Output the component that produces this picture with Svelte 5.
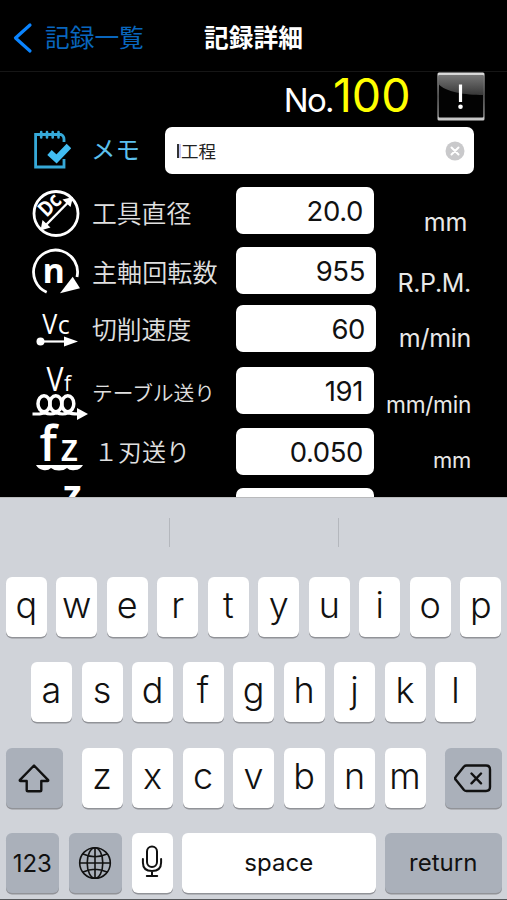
<script lang="ts">
  type Row = { id: string; label: string; value: string; unit: string };

  const rows: Row[] = [
    { id: 'dc', label: '工具直径', value: '20.0', unit: 'mm' },
    { id: 'n', label: '主軸回転数', value: '955', unit: 'R.P.M.' },
    { id: 'vc', label: '切削速度', value: '60', unit: 'm/min' },
    { id: 'vf', label: 'テーブル送り', value: '191', unit: 'mm/min' },
    { id: 'fz', label: '１刃送り', value: '0.050', unit: 'mm' },
    { id: 'z', label: '', value: '', unit: '' },
  ];

  let memo = $state('工程');
  const top = 'qwertyuiop'.split('');
  const middle = 'asdfghjkl'.split('');
  const bottom = 'zxcvbnm'.split('');

  function type(key: string) {
    memo = key + memo;
  }
</script>

<div class="screen">
  <header>
    <button class="back">
      <svg width="20" height="32" viewBox="0 0 20 32"><path d="M17 3 2.5 16 17 29" /></svg>
      <span>記録一覧</span>
    </button>
    <h1>記録詳細</h1>
  </header>

  <main>
    <div class="number">
      <span class="no">No.</span><span class="num">100</span>
      <button class="alert" aria-label="info">
        <svg width="48" height="49" viewBox="0 0 48 49">
          <defs>
            <linearGradient id="gloss" x1="0" y1="0" x2="0" y2="1">
              <stop offset="0" stop-color="#777" /><stop offset="1" stop-color="#383838" />
            </linearGradient>
            <linearGradient id="edge" x1="0" y1="0" x2="0" y2="1">
              <stop offset="0" stop-color="#ddd" /><stop offset=".5" stop-color="#888" /><stop offset="1" stop-color="#ccc" />
            </linearGradient>
          </defs>
          <rect x=".5" y=".5" width="47" height="48" rx="1.5" fill="url(#edge)" />
          <rect x="1.6" y="3" width="44.8" height="42.5" rx="1" fill="#030303" />
          <path d="M1.6 3h44.8v20C28 23 8 20 1.6 12z" fill="url(#gloss)" />
          <path d="M23.5 12.5v17.5" stroke="#fff" stroke-width="3.2" />
          <circle cx="23.5" cy="34.8" r="2.3" fill="#fff" />
        </svg>
      </button>
    </div>

    <div class="memo">
      <svg class="memoIcon" width="40" height="40" viewBox="0 0 40 40" fill="none" stroke="#36a9d8">
        <path d="M33 13V10q0-3-3-4.500H4.600v32.500H33V30" stroke-width="2.8" />
        <path d="M10.200 3v5.500M16 3v5.500M21.700 3v5.500M27.500 3v5.500" stroke-width="2.6" stroke-linecap="round" />
        <path d="M18.500 23.500l7 6.500L38 17" stroke="#41bdf3" stroke-width="6.5" />
      </svg>
      <span class="memoLabel">メモ</span>
      <div class="memoField">
        <i></i><span>{memo}</span>
        <svg width="20" height="20" viewBox="0 0 20 20">
          <circle cx="10" cy="10" r="9.5" fill="#c9c9cb" />
          <path d="M6.500 6.500l7 7m0-7l-7 7" stroke="#fff" stroke-width="2" stroke-linecap="round" />
        </svg>
      </div>
    </div>

    {#each rows as row}
      <div class="row {row.id}">
        <svg class="rowIcon" width="60" height="56" viewBox="0 0 60 56" fill="none" stroke="#fff">
          {#if row.id === 'dc'}
            <circle cx="26" cy="26.5" r="22" stroke-width="2.8" />
            <path d="M15 39 38 15.500" stroke-width="2.4" />
            <path d="M10.500 43.500l2-10.500 8 7.500zM43 10l-10.500 2.500 8 7.500z" class="solid" />
            <text x="0" y="0" transform="translate(16.5 31) rotate(-45)" font-size="21" font-weight="700" textLength="23" lengthAdjust="spacingAndGlyphs">Dc</text>
          {:else if row.id === 'n'}
            <path d="M16.700 45.200A22 22 0 1 1 47 30" stroke-width="2.8" />
            <path d="M42.700 29.700 50 41.300 30 46.300z" class="solid" />
            <text x="12.5" y="35.7" font-size="34" font-weight="700">n</text>
          {:else if row.id === 'vc'}
            <text x="12.3" y="29" font-size="28" textLength="15" lengthAdjust="spacingAndGlyphs">V</text>
            <text x="27.7" y="29" font-size="25">c</text>
            <circle cx="10.5" cy="36.5" r="4" class="solid" />
            <path d="M12 36.500h24" stroke-width="2.2" />
            <path d="M34 31.500 48 36.500 34 41.500z" class="solid" />
          {:else if row.id === 'vf'}
            <text x="16.5" y="24" font-size="32" textLength="17" lengthAdjust="spacingAndGlyphs">V</text>
            <text x="34" y="24" font-size="21" font-weight="500">f</text>
            <ellipse cx="14" cy="36.7" rx="6" ry="8" stroke-width="3.5" />
            <ellipse cx="25.8" cy="36.7" rx="6" ry="8" stroke-width="3.5" />
            <ellipse cx="37.8" cy="36.7" rx="6" ry="8" stroke-width="3.5" />
            <path d="M2.500 47h7q4-1 5-1.500 3 1.500 6 1.500t6-1.500q3 1.500 6 1.500t6-1.500q3 1.500 9 1.500" stroke-width="3.2" />
            <path d="M47 41 58 47 47 53z" class="solid" />
          {:else if row.id === 'fz'}
            <text x="9.5" y="33" font-size="48" font-weight="600">f</text>
            <text x="30.5" y="33" font-size="37" font-weight="600">z</text>
            <path d="M6 37h47q-3 5-8 5-5 1-8-2-3 2.500-8 2.500t-8-2.500q-3 3-8 2-5-1-7-5z" class="solid" />
          {:else}
            <text x="33" y="18.5" font-size="38" font-weight="700">z</text>
          {/if}
        </svg>
        <span class="label">{row.label}</span>
        <div class="value">{row.value}</div>
        <span class="unit">{row.unit}</span>
      </div>
    {/each}
  </main>

  <section class="keyboard">
    <div class="suggest"><span></span><span></span><span></span></div>
    <div class="keys">
      {#each top as key}<button class="key" onclick={() => type(key)}><span>{key}</span></button>{/each}
    </div>
    <div class="keys">
      {#each middle as key}<button class="key" onclick={() => type(key)}><span>{key}</span></button>{/each}
    </div>
    <div class="keys spread">
      <button class="key dark shift" aria-label="shift">
        <svg width="32" height="30" viewBox="0 0 32 30"><path d="M16 2.500 1.800 17.200q-.3.800.7.800H8.700v9q0 1.300 1.300 1.300h12q1.300 0 1.300-1.300v-9h6.200q1 0 .7-.8z" /></svg>
      </button>
      <div class="letters">
        {#each bottom as key}<button class="key" onclick={() => type(key)}><span>{key}</span></button>{/each}
      </div>
      <button class="key dark shift" aria-label="delete">
        <svg width="38" height="30" viewBox="0 0 38 30"><path d="M12.500 2.500H32q4 0 4 4v17.500q0 4-4 4H12.500q-1.500 0-2.500-1L1.800 16.800q-1.500-1.500 0-3L10 3.500q1-1 2.500-1zM17.500 10.500l9.500 9.800m0-9.800l-9.500 9.800" /></svg>
      </button>
    </div>
    <div class="keys last">
      <button class="key dark word side"><span>123</span></button>
      <button class="key dark side" aria-label="globe">
        <svg width="34" height="34" viewBox="0 0 34 34" class="thin">
          <circle cx="17" cy="17" r="15.3" />
          <ellipse cx="17" cy="17" rx="7.8" ry="15.3" />
          <path d="M17 1.700v30.600M1.700 17h30.600M5 8q12 5.500 24 0M5 26q12-5.500 24 0" />
        </svg>
      </button>
      <button class="key" aria-label="dictation">
        <svg width="22" height="34" viewBox="0 0 22 34" class="mic">
          <rect x="6" y="2.5" width="10" height="20.5" rx="5" />
          <path d="M1.900 15v3.500q0 8.500 9.100 8.500t9.100-8.500V15M11 27v5M5.800 32h10.400" />
        </svg>
      </button>
      <button class="key word space" onclick={() => type(' ')}><span>space</span></button>
      <button class="key dark word return"><span>return</span></button>
    </div>
  </section>
</div>

<style>
  :global(body) {
    margin: 0;
    background: #000;
  }

  .screen {
    display: flex;
    flex-direction: column;
    width: 507px;
    height: 900px;
    overflow: hidden;
    background: #000;
    color: #fff;
    font-family: Inter, "Noto Sans CJK JP", sans-serif;
  }

  button {
    margin: 0;
    padding: 0;
    border: 0;
    background: none;
    color: inherit;
    font-family: inherit;
  }

  svg {
    display: block;
    flex: none;
  }

  header {
    display: grid;
    grid-template-columns: 1fr auto 1fr;
    align-items: center;
    flex: none;
    box-sizing: border-box;
    height: 72px;
    padding-top: 4px;
    border-bottom: 1px solid #161616;
  }

  .back {
    display: flex;
    align-items: center;
    gap: 12px;
    padding-left: 13px;
    color: #0966bd;
    font-size: 24.7px;
    line-height: 36px;
  }

  .back svg {
    fill: none;
    stroke: #0a84ff;
    stroke-width: 3.2;
    stroke-linecap: round;
    stroke-linejoin: round;
  }

  h1 {
    margin: 0;
    font-size: 24.7px;
    font-weight: 700;
    line-height: 36px;
  }

  main {
    flex: none;
    height: 425px;
    overflow: hidden;
  }

  .number {
    display: flex;
    justify-content: flex-end;
    align-items: baseline;
    box-sizing: border-box;
    height: 55px;
    padding-right: 22px;
    line-height: 46px;
  }

  .no {
    font-size: 33px;
    font-weight: 400;
    letter-spacing: -1.7px;
  }

  .num {
    color: #ff0;
    font-size: 46.5px;
    font-weight: 400;
  }

  .alert {
    align-self: flex-start;
    margin-left: 26.5px;
  }

  .memo {
    display: flex;
    height: 60px;
  }

  .memoIcon {
    margin: 2px 0 0 31px;
  }

  .memoLabel {
    width: 74px;
    padding-left: 20px;
    color: #5cc0ee;
    font-size: 24.5px;
    line-height: 46px;
  }

  .memoField {
    display: flex;
    align-items: center;
    box-sizing: border-box;
    width: 309px;
    height: 47px;
    padding: 0 9px 0 12px;
    border-radius: 7px;
    background: #fff;
    color: #222;
    font-size: 17.5px;
  }

  .memoField i {
    flex: none;
    width: 2px;
    height: 14px;
    border-right: 2px solid #c6cbf8;
    background: #333;
  }

  .memoField span {
    flex: 1;
  }

  .row {
    display: grid;
    grid-template-columns: 62px 144px 140px 1fr;
    height: 60px;
    padding: 0 36px 0 30px;
  }

  .rowIcon {
    overflow: visible;
  }

  .rowIcon text {
    fill: #fff;
    stroke: none;
    font-family: "Open Sans", sans-serif;
  }

  .rowIcon .solid {
    fill: #fff;
    stroke: none;
  }

  .label {
    color: #e0e0e0;
    font-family: "Noto Sans CJK JP", sans-serif;
    font-size: 24.8px;
    font-weight: 350;
    line-height: 50px;
    white-space: nowrap;
  }

  .value {
    box-sizing: border-box;
    width: 138px;
    height: 47px;
    padding-right: 11px;
    border-radius: 7px;
    background: #fff;
    color: #111;
    font-size: 27.5px;
    letter-spacing: -0.4px;
    line-height: 48px;
    text-align: right;
  }

  .unit {
    justify-self: end;
    color: #e8e8e8;
    font-size: 25px;
    font-weight: 400;
    letter-spacing: -0.3px;
    line-height: 30px;
    white-space: nowrap;
  }

  .dc .unit {
    padding: 20px 4px 0 0;
  }

  .n {
    height: 58px;
  }

  .n .label {
    font-size: 25.1px;
    line-height: 48px;
  }

  .n .unit {
    padding-top: 21px;
  }

  .n .value,
  .vc .value {
    width: 140px;
  }

  .vc {
    height: 62px;
  }

  .vc .label {
    line-height: 46px;
  }

  .vc .unit {
    padding-top: 18px;
  }

  .vf {
    height: 61px;
  }

  .vf .label {
    font-size: 20.7px;
  }

  .vf .unit {
    padding-top: 23px;
    font-size: 22.7px;
  }

  .fz .label {
    padding-left: 2px;
    font-size: 24px;
    line-height: 45px;
  }

  .fz .unit {
    padding-top: 17px;
    font-size: 22px;
  }

  .keyboard {
    display: flex;
    flex-direction: column;
    flex: 1;
    box-sizing: border-box;
    border-top: 1px solid #b9babc;
    border-bottom: 1px solid #55575a;
    background: #d0d3d9;
    color: #111;
  }

  .suggest {
    display: grid;
    flex: none;
    grid-template-columns: repeat(3, 1fr);
    height: 29px;
    margin: 20px 0 29.5px;
  }

  .suggest span + span {
    border-left: 1px solid #b4b7bd;
  }

  .keys {
    display: flex;
    flex: none;
    justify-content: center;
    gap: 9.5px;
    height: 60px;
    margin-bottom: 25.5px;
  }

  .spread,
  .last {
    justify-content: space-between;
    padding: 0 5.5px;
  }

  .last {
    margin-bottom: 0;
  }

  .letters {
    display: flex;
    gap: 9.5px;
  }

  .key {
    display: flex;
    justify-content: center;
    align-items: center;
    box-sizing: border-box;
    width: 41px;
    height: 60px;
    padding-bottom: 4px;
    border-radius: 6px;
    background: #fff;
    box-shadow: 0 1.5px 0 #919398;
    font-size: 36px;
    font-weight: 350;
    line-height: 44px;
  }

  .dark {
    background: #aab0ba;
  }

  .key svg {
    fill: none;
    stroke: #111;
    stroke-width: 2.4;
    stroke-linejoin: round;
    stroke-linecap: round;
  }

  .key .thin {
    stroke-width: 1.6;
  }

  .key .mic {
    stroke-width: 2;
  }

  .shift {
    width: 57px;
    padding-bottom: 0;
  }

  .word {
    padding-bottom: 1px;
    font-size: 24px;
    font-weight: 400;
  }

  .side {
    width: 53.5px;
    padding-bottom: 0;
  }

  .word.side {
    padding: 2px 0 0;
  }

  .space {
    width: 193.5px;
  }

  .return {
    width: 116.5px;
  }
</style>
